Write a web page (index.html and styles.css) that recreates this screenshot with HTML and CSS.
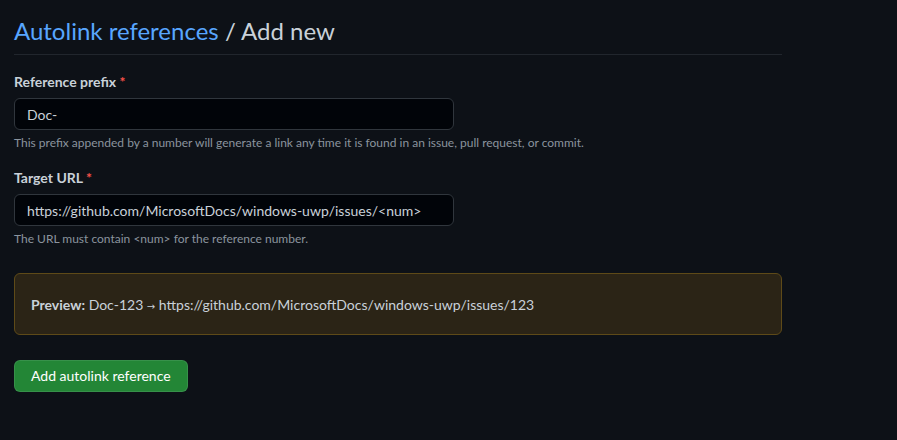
FILE: index.html
```html
<!DOCTYPE html>
<html lang="en">
<head>
<meta charset="utf-8">
<title>Autolink references / Add new</title>
<link rel="stylesheet" href="styles.css">
</head>
<body>
<div class="container">
  <div class="subhead">
    <h1 class="subhead-heading"><a class="crumb" href="#">Autolink references</a> / Add new</h1>
  </div>
  <form class="form">
    <div class="form-group">
      <label class="form-label">Reference prefix <span class="req">*</span></label>
      <input class="form-control" type="text" value="Doc-">
      <p class="note">This prefix appended by a number will generate a link any time it is found in an issue, pull request, or commit.</p>
    </div>
    <div class="form-group">
      <label class="form-label">Target URL <span class="req">*</span></label>
      <input class="form-control" type="text" value="https://github.com/MicrosoftDocs/windows-uwp/issues/&lt;num&gt;">
      <p class="note">The URL must contain &lt;num&gt; for the reference number.</p>
    </div>
    <div class="flash">
      <span><strong>Preview:</strong> Doc-123 <span class="arrow">→</span> https://github.com/MicrosoftDocs/windows-uwp/issues/123</span>
    </div>
    <button class="btn-primary" type="button">Add autolink reference</button>
  </form>
</div>
</body>
</html>
```
FILE: styles.css
```css
* { box-sizing: border-box; }
html, body {
  margin: 0;
  background: #0d1117;
  color: #c9d1d9;
  font-family: Lato, "Noto Sans", sans-serif;
  font-size: 14px;
}
.container {
  width: 768px;
  margin-left: 14px;
  padding-top: 16px;
}
.subhead {
  border-bottom: 1px solid #21262d;
  padding-bottom: 8px;
}
.subhead-heading {
  margin: 0;
  font-size: 24px;
  line-height: 30px;
  font-weight: 400;
  color: #c9d1d9;
}
.crumb {
  color: #58a6ff;
  text-decoration: none;
}
.form-group {
  margin-top: 17px;
}
.form-group + .form-group {
  margin-top: 16px;
}
.form-label {
  display: block;
  font-weight: 700;
  font-size: 14px;
  line-height: 20px;
  margin-bottom: 6px;
}
.req { color: #f85149; }
.form-control {
  display: block;
  width: 440px;
  height: 32px;
  padding: 5px 12px;
  background: #010409;
  border: 1px solid #30363d;
  border-radius: 6px;
  color: #c9d1d9;
  font-family: inherit;
  font-size: 14px;
  line-height: 20px;
  outline: none;
}
.note {
  margin: 4px 0 0;
  font-size: 12px;
  line-height: 18px;
  color: #8b949e;
}
.flash {
  margin-top: 25px;
  height: 62px;
  display: flex;
  align-items: center;
  padding: 0 16px;
  background: #2b2416;
  border: 1px solid #5e4a18;
  border-radius: 6px;
  font-size: 14px;
}
.flash strong { font-weight: 700; }
.arrow {
  font-family: "DejaVu Sans", sans-serif;
  font-size: 10px;
}
.btn-primary {
  display: block;
  margin-top: 25px;
  height: 32px;
  padding: 0 16px;
  background: #238636;
  border: 1px solid rgba(240,246,252,0.1);
  border-radius: 6px;
  color: #ffffff;
  font-family: inherit;
  font-size: 14px;
  line-height: 20px;
}
```
